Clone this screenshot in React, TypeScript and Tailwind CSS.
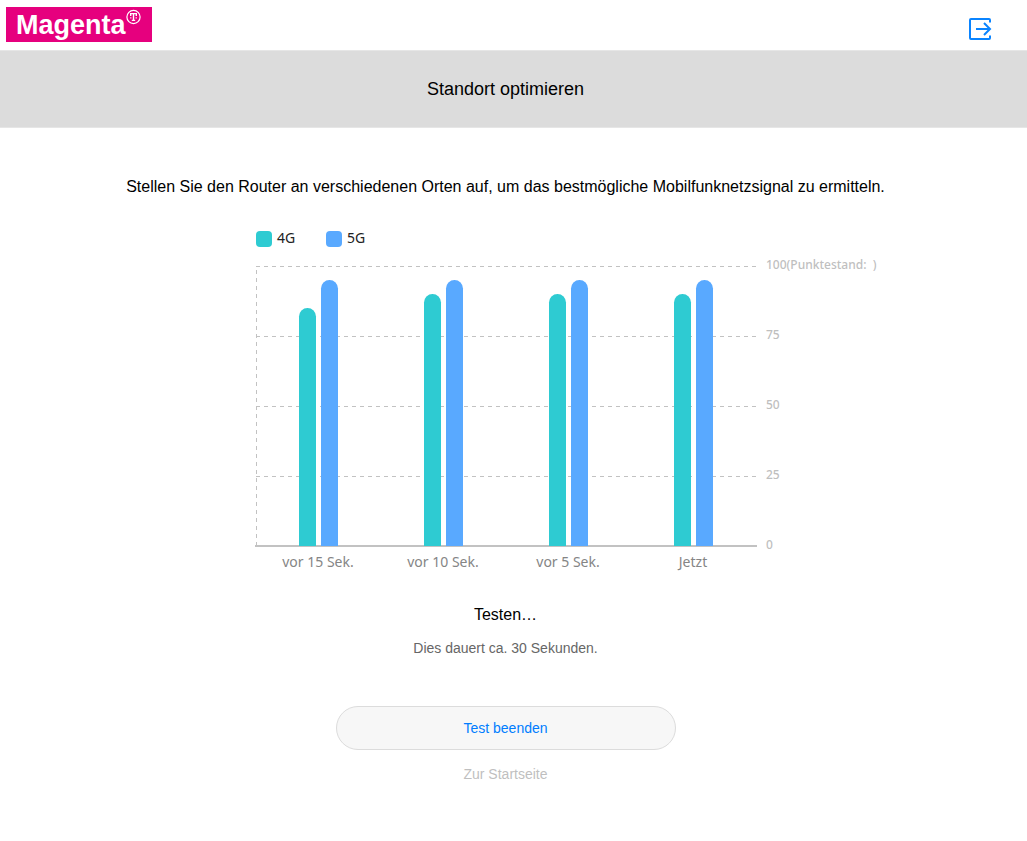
const readings = [
  { label: "vor 15 Sek.", lte: 85, nr: 95 },
  { label: "vor 10 Sek.", lte: 90, nr: 95 },
  { label: "vor 5 Sek.", lte: 90, nr: 95 },
  { label: "Jetzt", lte: 90, nr: 95 },
];

const ticks = [
  { value: 100, label: "100(Punktestand:\u00a0 )" },
  { value: 75, label: "75" },
  { value: 50, label: "50" },
  { value: 25, label: "25" },
  { value: 0, label: "0" },
];

const LEFT = 71;
const RIGHT = 572;
const BASE = 326;
const HEIGHT = 280;
const yOf = (value: number) => BASE - (value * HEIGHT) / 100;

function Bar({ x, value, fill }: { x: number; value: number; fill: string }) {
  const top = yOf(value);
  return (
    <path
      d={`M${x} ${BASE}V${top + 8.5}a8.5 8.5 0 0 1 17 0V${BASE}z`}
      fill={fill}
    />
  );
}

function SignalChart() {
  return (
    <svg
      viewBox="0 0 717 360"
      className="mt-[21px] ml-[76px] w-[717px] max-w-full font-['Noto_Sans','Open_Sans',sans-serif]"
      role="img"
      aria-label="Signalstärke 4G und 5G"
    >
      <rect x="71" y="11" width="16" height="16" rx="4" fill="#2ecbd2" />
      <text x="92" y="23" className="text-[14px]" fill="#222">4G</text>
      <rect x="141" y="11" width="16" height="16" rx="4" fill="#59a9ff" />
      <text x="162" y="23" className="text-[14px]" fill="#222">5G</text>

      {ticks.map((t) => (
        <g key={t.value}>
          {t.value > 0 && (
            <line
              x1={LEFT}
              x2={RIGHT}
              y1={yOf(t.value) + 0.5}
              y2={yOf(t.value) + 0.5}
              stroke="#c2c2c2"
              strokeDasharray="4 4"
            />
          )}
          <text x="581" y={yOf(t.value) + 3} className="text-[12px] font-medium" fill="#bfbfbf">
            {t.label}
          </text>
        </g>
      ))}
      <line x1="71.5" x2="71.5" y1={BASE} y2="46" stroke="#c2c2c2" strokeDasharray="4 4" />
      <rect x="70" y="325" width="502" height="2" fill="#c2c2c2" />

      {readings.map((r, i) => (
        <g key={r.label}>
          <Bar x={114 + i * 125} value={r.lte} fill="#2ecbd2" />
          <Bar x={136 + i * 125} value={r.nr} fill="#59a9ff" />
          <text x={133 + i * 125} y="347" textAnchor="middle" className="text-[14px]" fill="#858585">
            {r.label}
          </text>
        </g>
      ))}
    </svg>
  );
}

function Logo() {
  return (
    <a href="#" className="flex h-[35px] w-[146px] bg-[#e6007e] pl-[10px] text-white">
      <span className="text-[27px] leading-[36px] font-bold">Magenta</span>
      <svg viewBox="0 0 16 16" className="mt-[2px] size-4 shrink-0" fill="none" stroke="currentColor" aria-hidden="true">
        <circle cx="7.500" cy="8" r="6.6" strokeWidth="1.2" />
        <path d="M4.700 7V4.600h5.600V7M7.500 4.600v6.600M5.800 11.400h3.400" strokeWidth="1.4" />
        <path d="M4.200 8.800h1.200M9.600 8.800h1.200" strokeWidth="1.3" />
      </svg>
    </a>
  );
}

export default function App() {
  return (
    <div className="min-h-screen bg-white font-['Liberation_Sans',Arial,sans-serif] text-black">
      <header className="flex h-[50px] items-start justify-between pt-[7px] pr-[35px] pl-[6px]">
        <Logo />
        <button type="button" aria-label="Abmelden" className="mt-[9px]">
          <svg viewBox="0 0 24 26" className="h-[26px] w-6" fill="none" stroke="#0a84ff" strokeWidth="2" aria-hidden="true">
            <path d="M22 6.500V4Q22 3 21 3H3Q2 3 2 4V22Q2 23 3 23H21Q22 23 22 22V19.500" />
            <path d="M8 13H22.500M16 7L22 13L16 19" />
          </svg>
        </button>
      </header>
      <div className="flex h-[78px] items-center justify-center border-y border-[#e6e6e6] bg-[#dcdcdc] pr-4">
        <h1 className="text-[18px] leading-6">Standort optimieren</h1>
      </div>
      <main className="flex flex-col items-center pt-[47px] pr-4 pb-14 text-center">
        <p className="text-[16px] leading-6">
          Stellen Sie den Router an verschiedenen Orten auf, um das bestmögliche Mobilfunknetzsignal zu ermitteln.
        </p>
        <SignalChart />
        <p className="mt-[23px] text-[16px] leading-6">Testen…</p>
        <p className="mt-[11px] text-[14px] leading-5 text-[#666]">Dies dauert ca. 30 Sekunden.</p>
        <button
          type="button"
          className="mt-12 h-11 w-[340px] max-w-full rounded-full border border-[#dcdcdc] bg-[#f7f7f7] text-[14px] text-[#007dff]"
        >
          Test beenden
        </button>
        <a href="#" className="mt-[14px] text-[14px] leading-5 text-[#bfbfbf]">
          Zur Startseite
        </a>
      </main>
    </div>
  );
}
